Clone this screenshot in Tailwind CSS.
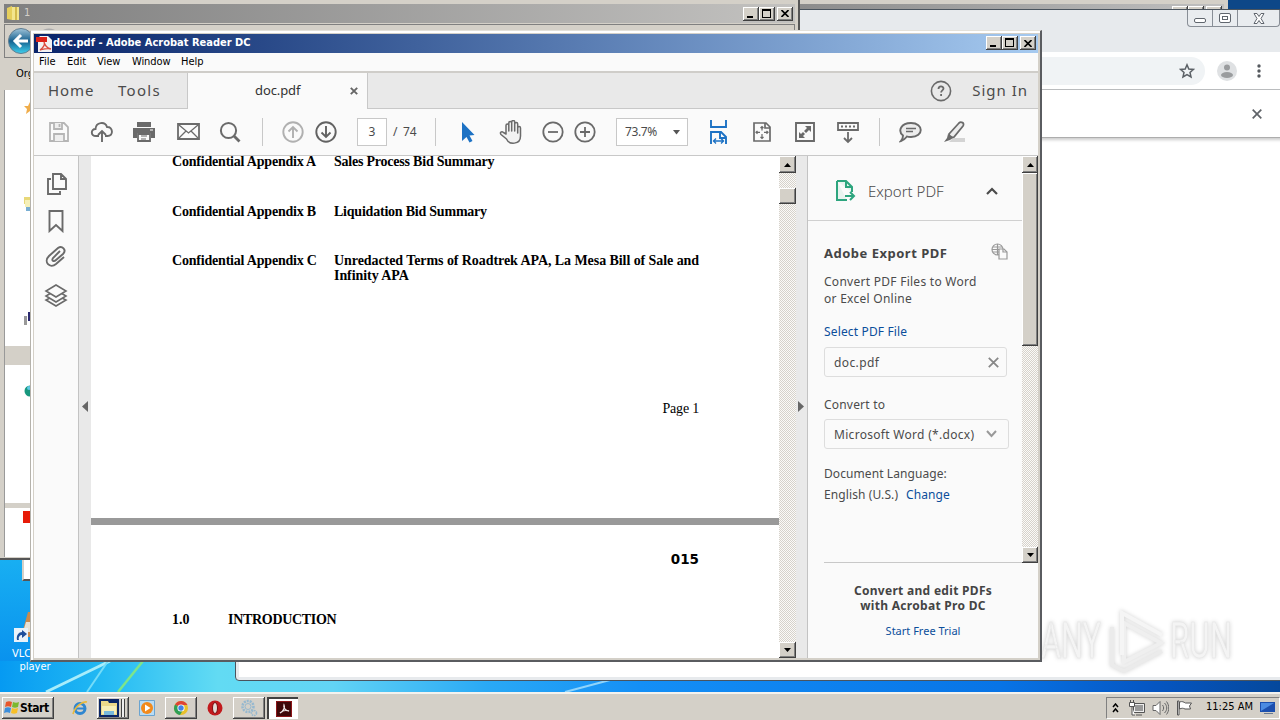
<!DOCTYPE html>
<html lang="en">
<head>
    <meta charset="UTF-8">
    <meta name="viewport" content="width=device-width, initial-scale=1.0">
    <title>doc.pdf - Adobe Acrobat Reader DC</title>
    <script src="https://cdn.jsdelivr.net/npm/@tailwindcss/browser@4"></script>
    <style>
        .ui { font-family: "DejaVu Sans Condensed", "DejaVu Sans", sans-serif; font-stretch: condensed; }
        .clean { font-family: "Noto Sans", "Open Sans", sans-serif; }
        .doc { font-family: "Liberation Serif", serif; }

        .raised {
            background: #d4d0c8;
            box-shadow: inset -1px -1px #404040, inset 1px 1px #fff, inset -2px -2px #808080;
        }

        .track {
            background: repeating-conic-gradient(#d6d2cb 0% 25%, #fbfaf8 0% 50%) 0 0 / 2px 2px;
        }

        svg { flex-shrink: 0; }
    </style>
</head>
<body class="overflow-hidden">
<div class="relative w-[1280px] h-[720px] overflow-hidden bg-[#0d8ff0]">

    <!-- Wallpaper -->
    <svg class="absolute left-0 top-0" width="1280" height="720">
        <defs>
            <linearGradient id="sky">
                <stop offset="0" stop-color="#069af2"/>
                <stop offset=".08" stop-color="#22b9f3"/>
                <stop offset=".17" stop-color="#62dbf3"/>
                <stop offset=".26" stop-color="#62d4f5"/>
                <stop offset=".38" stop-color="#2aa9f5"/>
                <stop offset=".5" stop-color="#148ff6"/>
                <stop offset=".78" stop-color="#0874e6"/>
                <stop offset=".9" stop-color="#0656c2"/>
                <stop offset="1" stop-color="#05489c"/>
            </linearGradient>
            <linearGradient id="left" x2="0" y2="1">
                <stop offset="0" stop-color="#18aff2"/>
                <stop offset="1" stop-color="#0992ee"/>
            </linearGradient>
        </defs>
        <rect width="1280" height="720" fill="url(#sky)"/>
        <rect y="559" width="31" height="102" fill="url(#left)"/>
        <rect x="1228" width="52" height="10" fill="#0d4788"/>
        <path d="M46 692 110 661" stroke="#a8edfb" stroke-width="3"/>
        <path d="M87 692 108 661" stroke="#74dcf8" stroke-width="2"/>
        <path d="M118 692 143 661" stroke="#7de58a" stroke-width="2.5"/>
        <path d="M565 692 610 680" stroke="#8fd4fb" stroke-width="2"/>
    </svg>

    <!-- Desktop shortcut -->
    <div class="ui absolute left-0 top-[610px] w-[70px] h-[64px] text-[11px] leading-[13px] text-white text-center">
        <svg class="absolute left-[13px] top-[2px]" width="20" height="42">
            <path d="M15 0 8 25h12V0Z" fill="#c98a4e"/>
            <path d="M13 10 10 20h10V10Z" fill="#e9e2d6"/>
            <path d="M1 16h14v14H1Z" fill="#e9f2fa"/>
            <path d="M4 28c-1-5 2-8 5-8v-2l5 4-5 4v-3c-2 0-4 2-3 5Z" fill="#1d4e9b"/>
        </svg>
        <div class="pt-[37px] pl-[12px] text-left whitespace-nowrap">VLC media</div>
        <div>player</div>
    </div>
    <div class="absolute left-[22px] top-[540px] w-5 h-[41px] bg-white border-2 border-[#d4d0c8] border-b-[#555]"></div>

    <!-- Explorer window at the back -->
    <div class="absolute left-[700px] top-0 w-[528px] h-[60px] bg-[#d4d0c8] pt-1 pr-1">
        <div class="h-[18px] bg-linear-to-r from-[#808080] to-[#c0c0c0] flex justify-end pt-[2px] pr-[2px]">
            <div class="raised w-4 h-[14px]"></div><div class="raised w-4 h-[14px]"></div><div class="raised w-4 h-[14px] ml-[2px]"></div>
        </div>
    </div>

    <!-- Chrome window -->
    <div class="absolute left-[235px] top-[9px] w-[1060px] h-[672px] rounded-b-[4px] border border-[#4a545e] bg-[#e7eaed] px-[3px] pb-[3px] flex flex-col">
        <div class="h-[42px]">
            <div class="ml-[948px] w-[93px] h-[17px] rounded-b-[4px] border border-t-0 border-[#888e96] flex bg-[#e9ecef]">
                <div class="w-[25px] border-r border-[#888e96] flex justify-center items-end pb-[3px]"><div class="w-3 h-[5px] rounded-[2px] border border-[#60666e] bg-white"></div></div>
                <div class="w-[25px] border-r border-[#888e96] flex justify-center items-center"><div class="w-3 h-[10px] rounded-[2px] border border-[#60666e] bg-white flex items-center justify-center"><div class="w-[6px] h-1 border border-[#60666e]"></div></div></div>
                <div class="flex-1 flex justify-center items-center">
                    <svg width="12" height="11" viewBox="0 0 12 11"><path d="M1 .5h3l2 3 2-3h3L8 5.500l3 5H8l-2-3-2 3H1l3-5Z" fill="#fff" stroke="#60666e"/></svg>
                </div>
            </div>
        </div>
        <div class="h-[38px] bg-white border-b border-[#b9bbbd] flex items-center">
            <div class="w-[966px] h-7 rounded-full bg-[#f0f3f5] flex items-center justify-end pr-[10px]">
                <svg width="16" height="16" viewBox="0 0 16 16" fill="none" stroke="#5b6066" stroke-width="1.500"><path d="m8 1.800 1.800 4.200 4.600.4L11 9.400l1 4.500-4-2.400-4 2.400 1-4.500L1.600 6.400 6.200 6Z"/></svg>
            </div>
            <svg class="ml-[12px]" width="20" height="20"><circle cx="10" cy="10" r="10" fill="#dfe1e3"/><circle cx="10" cy="6.500" r="3" fill="#9a9c9e"/><ellipse cx="10" cy="14" rx="6" ry="3" fill="#9a9c9e"/></svg>
            <svg class="ml-[19px]" width="6" height="16" fill="#55595e"><circle cx="3" cy="3" r="1.700"/><circle cx="3" cy="8" r="1.700"/><circle cx="3" cy="13" r="1.700"/></svg>
        </div>
        <div class="relative h-[48px] bg-white border-b border-[#adadad] shadow-[0_2px_3px_#ccc] flex items-center">
            <svg class="ml-[1013px]" width="10" height="10"><path d="M.7.7l8.600 8.600M9.300.7.7 9.300" stroke="#5f6368" stroke-width="1.700"/></svg>
        </div>
        <div class="flex-1 bg-white"></div>
    </div>

    <!-- Watermark -->
    <div class="absolute left-[1041px] top-[605px] w-[200px] h-[74px]">
        <svg width="200" height="74" style="filter: drop-shadow(0 0 2px #d2d2d2)">
            <g font-family="Roboto, sans-serif" font-size="50" font-weight="400" fill="#f4f4f4" stroke="#e6e6e6" stroke-width=".6">
                <text x="0" y="53" textLength="60" lengthAdjust="spacingAndGlyphs">ANY</text>
                <text x="129" y="53" textLength="62" lengthAdjust="spacingAndGlyphs">RUN</text>
            </g>
            <g fill="none" stroke="#efefef" stroke-width="4">
                <path d="M83 18 120 38 83 57Z"/>
                <path d="M71 22v38l12 6 38-20" stroke="#ebebeb"/>
                <path d="M81 50V8L121 30" stroke="#f5f5f5"/>
            </g>
        </svg>
    </div>

    <!-- Explorer window "1" -->
    <div class="absolute left-0 top-0 w-[800px] h-[560px] bg-[#d4d0c8] border-r-2 border-b-2 border-[#555] pl-1 pr-[3px] pt-1">
        <div class="h-[19px] bg-linear-to-r from-[#808080] to-[#c3c2c0] flex items-center pl-[3px] pr-[2px]">
            <svg width="13" height="15"><path d="M0 2 5 0v14l-5-1Z" fill="#e6cf5c"/><path d="M5 1h7v13H5Z" fill="#f3e58d"/><path d="M8 1h2v13H8Z" fill="#d3ba4c"/></svg>
            <span class="ui ml-1 text-[11px] text-[#d4d0c8]">1</span>
            <div class="ml-auto flex">
                <div class="raised w-4 h-[14px] pl-1 pt-[9px]"><div class="w-[6px] h-[2px] bg-black"></div></div>
                <div class="raised w-4 h-[14px] pl-[3px] pt-[2px]"><div class="w-[9px] h-[9px] border border-t-2 border-black"></div></div>
                <div class="raised w-4 h-[14px] ml-[2px] flex items-center justify-center"><svg width="8" height="7"><path d="M.5 0l7 7M7.500 0l-7 7" stroke="#000" stroke-width="1.600"/></svg></div>
            </div>
        </div>
        <div class="mt-[1px] h-[34px] border border-[#808080] flex items-center pl-[3px] overflow-hidden">
            <svg width="50" height="28">
                <defs><linearGradient id="orb" x2="0" y2="1"><stop offset="0" stop-color="#9fc3d8"/><stop offset=".5" stop-color="#17618f"/><stop offset="1" stop-color="#3ed0ee"/></linearGradient></defs>
                <circle cx="13" cy="14" r="12.500" fill="url(#orb)" stroke="#607d90"/>
                <path d="M20 14H7m6-6-6 6 6 6" stroke="#fff" stroke-width="3" fill="none"/>
                <circle cx="41" cy="14" r="12.500" fill="#aaa"/>
            </svg>
        </div>
        <div class="ui h-[32px] pl-3 pt-[8px] text-[11px]">Organize</div>
        <div class="relative h-[467px] bg-white border-l border-[#999]">
            <div class="pl-[19px] pt-3 w-[27px] overflow-hidden"><svg width="12" height="12"><path d="m6 0 2 4h4L9 7l1 5-4-3-4 3 1-5-3-3h4Z" fill="#f0ad4a"/></svg></div>
            <div class="pl-[19px] pt-[83px]"><svg width="12" height="14"><path d="M0 0h12v7H0Z" fill="#e8d878"/><path d="M2 5h10v9H2Z" fill="#78aed3"/><path d="M1 3h8v7H1Z" fill="#f5f0ba"/></svg></div>
            <div class="pl-[19px] pt-[100px]"><svg width="12" height="14"><path d="M0 5h3v9H0Z" fill="#999"/><path d="M4 1h5v9H4Z" fill="#2b2a70"/></svg></div>
            <div class="mt-[21px] h-[19px] bg-[#d4d0c8]"></div>
            <div class="pl-[19px] pt-[20px]"><svg width="12" height="12"><circle cx="6" cy="6" r="5.500" fill="#18987e"/><circle cx="5" cy="3" r="2" fill="#60c8e6"/></svg></div>
            <div class="mt-[106px] h-[5px] bg-[#d4d0c8]"></div>
            <div class="ml-[18px] mt-[3px] w-5 h-3 bg-[#e71b08]"></div>
        </div>
    </div>

    <!-- Acrobat Reader -->
    <div class="absolute left-[30px] top-[30px] w-[1012px] h-[632px] bg-[#d4d0c8] border-r-2 border-b-2 border-[#5a5c60] border-t border-l border-t-[#e4e1da] border-l-[#b5b2ab] flex flex-col shadow-[inset_2px_2px_#fff] pl-[3px] pt-[3px] pr-[2px] pb-[2px]">

        <div class="h-[19px] shrink-0 bg-linear-to-r from-[#0a246a] to-[#a6caf0] flex items-center pl-[2px] pr-[2px]">
            <svg width="16" height="16"><path d="M4 0h8l4 4v12H2V2Z" fill="#f3f1f1"/><path d="M0 1h11v5H0Z" fill="#dd2218"/><path d="M4 14c4-3 5-6 4-8 1 4 3 6 7 7-4-1-7 0-11 1Z" fill="none" stroke="#db4b3e" stroke-width="1.300"/></svg>
            <span class="ui ml-[1px] text-[11px] font-bold text-white w-[198px] whitespace-nowrap">doc.pdf - Adobe Acrobat Reader DC</span>
            <div class="ml-auto flex mb-[1px]">
                <div class="raised w-4 h-[14px] pl-1 pt-[9px]"><div class="w-[6px] h-[2px] bg-black"></div></div>
                <div class="raised w-4 h-[14px] pl-[3px] pt-[2px]"><div class="w-[9px] h-[9px] border border-t-2 border-black"></div></div>
                <div class="raised w-4 h-[14px] ml-[2px] flex items-center justify-center"><svg width="8" height="7"><path d="M.5 0l7 7M7.500 0l-7 7" stroke="#000" stroke-width="1.600"/></svg></div>
            </div>
        </div>

        <div class="ui h-[20px] shrink-0 bg-[#fafafa] border-b-2 border-[#cfcdc9] flex items-center text-[11px] text-black pl-[5px]">
            <span class="w-[28px]">File</span><span class="w-[30px]">Edit</span><span class="w-[35px]">View</span><span class="w-[49px] tracking-[-.1px]">Window</span><span>Help</span>
        </div>

        <div class="clean h-[36px] shrink-0 bg-[#e9e9e9] flex text-[#4b4b4b]">
            <div class="w-[154px] border-b border-r border-[#c8c8c8] flex items-center pl-[14px] text-[15px] tracking-[.9px]">
                <span class="w-[70px]">Home</span><span class="tracking-[1.3px]">Tools</span>
            </div>
            <div class="w-[180px] bg-[#fafafa] border-r border-[#c8c8c8] flex items-center text-[13px]">
                <span class="w-[162px] pl-[67px] text-[#333] tracking-[-.1px]">doc.pdf</span>
                <svg width="8" height="8"><path d="M.8.8l6.400 6.400M7.200.8.8 7.200" stroke="#666" stroke-width="1.900"/></svg>
            </div>
            <div class="flex-1 border-b border-[#c8c8c8] flex items-center justify-end pr-[10px] text-[15px] tracking-[1px]">
                <svg class="mr-5" width="22" height="22"><circle cx="11" cy="11" r="9.600" fill="none" stroke="#6a6a6a" stroke-width="1.600"/><path d="M8.500 9c0-3.500 5-3.200 5-.4 0 1.800-2.400 1.900-2.400 4M11.100 14v2" fill="none" stroke="#6a6a6a" stroke-width="1.800"/></svg>
                <span>Sign In</span>
            </div>
        </div>

        <div class="clean h-[47px] shrink-0 bg-[#fafafa] border-b border-[#c8c8c8] flex items-center pl-[14px] text-[12px] text-[#4b4b4b]">
            <svg class="mr-[20px]" width="22" height="22" fill="none" stroke="#b5b5b5" stroke-width="1.800"><path d="M2 2h14l4 4v14H2Z"/><path d="M6 2v6h8V2M11.500 3v3M6 20v-7h10v7" fill="#eee"/></svg>
            <svg class="mr-[19px]" width="24" height="24" fill="none" stroke="#6a6a6a" stroke-width="1.900"><path d="M9 16H6C.5 16 .5 9 5.500 9 6 2 15 1 17 7c6-.5 7 9 .5 9H15"/><path d="M12 22V11m-4 4 4-4 4 4"/></svg>
            <svg class="mr-[22px]" width="22" height="22"><path d="M4 1h14v5H4ZM0 7h22v10h-4v-5H4v5H0Z" fill="#6a6a6a"/><path d="M5.500 2.500h11M5 13h12v7H5Z" fill="#fafafa" stroke="#6a6a6a" stroke-width="1.800"/><path d="M8 15h6M8 18h5" stroke="#6a6a6a"/><path d="M17 9h3" stroke="#fff"/></svg>
            <svg class="mr-[19px]" width="23" height="22" fill="none" stroke="#6a6a6a"><path d="M1 3h21v15H1Z" stroke-width="1.800"/><path d="m2 4 9.500 8L21 4M2 17l7-7M21 17l-7-7" stroke-width="1.300"/></svg>
            <svg class="mr-[21px]" width="22" height="22" fill="none" stroke="#6a6a6a"><circle cx="9.500" cy="9.500" r="7.600" stroke-width="2"/><path d="m15 15 5.500 5.500" stroke-width="2.800"/></svg>
            <div class="w-px h-7 bg-[#c8c8c8] mr-[19px]"></div>
            <svg class="mr-[11px]" width="22" height="22" fill="none" stroke="#b0b0b0" stroke-width="1.900"><circle cx="11" cy="11" r="9.700"/><path d="M11 17V6m-4.500 4.500L11 6l4.500 4.500"/></svg>
            <svg class="mr-[20px]" width="22" height="22" fill="none" stroke="#626262" stroke-width="1.900"><circle cx="11" cy="11" r="9.700"/><path d="M11 5v11m-4.500-4.500L11 16l4.500-4.500"/></svg>
            <div class="w-[30px] h-7 bg-white border border-[#c8c8c8] flex items-center justify-center">3</div>
            <span class="ml-[6px] w-[42px] tracking-[-.2px] whitespace-pre">/  74</span>
            <div class="w-px h-7 bg-[#c8c8c8] mr-[25px]"></div>
            <svg class="mr-[23px]" width="15" height="22"><path d="M1 1v19l4.500-4 3 5.500 3-1.500-3-5.500 5-.5Z" fill="#1d72c4"/></svg>
            <svg class="mr-[19px]" width="24" height="24" fill="#f2f2f2" stroke="#6a6a6a" stroke-width="1.500" stroke-linejoin="round"><path d="M7 14V5.500c0-2 2.800-2 2.800 0V11 3c0-2 2.900-2 2.900 0v8-9c0-2 3-2 3 0v9-7c0-2 3-2 3 0v9-5c0-2 2.800-2 2.800 0v8c0 9-11.500 9-14 3L2 14.500c-1.500-2 .5-3.500 2.500-2Z"/></svg>
            <svg class="mr-[10px]" width="22" height="22" fill="none" stroke="#6a6a6a" stroke-width="1.800"><circle cx="11" cy="11" r="9.700"/><path d="M6 11h10"/></svg>
            <svg class="mr-[20px]" width="22" height="22" fill="none" stroke="#6a6a6a" stroke-width="1.800"><circle cx="11" cy="11" r="9.700"/><path d="M6 11h10M11 6v10"/></svg>
            <div class="w-[72px] h-7 bg-white border border-[#c8c8c8] flex items-center pl-2 tracking-[-.4px]"><span class="w-[48px]">73.7%</span><svg width="8" height="5"><path d="M0 0h7L3.500 4.500Z" fill="#555"/></svg></div>
            <svg class="ml-[21px] mr-[24px]" width="19" height="24" fill="none" stroke="#1d72c4" stroke-width="1.900"><path d="M2 0v7h15V0M2 24V12h10l5 5v7M11 12v6h6"/><path d="M4 21h11m-8-2.500L4.500 21 7 23.500m5-5 2.500 2.500-2.500 2.500" stroke-width="1.300"/></svg>
            <svg class="mr-[23px]" width="20" height="22" fill="none" stroke="#6a6a6a"><path d="M2 2h12l4 4v14H2ZM13 2v5h5" stroke-width="1.700"/><path d="M10 5.500v4M10 13v4M4 11.300h4M12 11.300h4M8.500 7 10 5.500 11.500 7m-3 9 1.500 1.500 1.500-1.500M5.500 10 4 11.300l1.500 1.400m9-2.700 1.500 1.300-1.500 1.400" stroke-width="1.200"/></svg>
            <svg class="mr-[22px]" width="20" height="22"><path d="M1 2h18v18H1Z" fill="none" stroke="#6a6a6a" stroke-width="1.900"/><path d="M10 5h6v6l-2-2-3 3-2-2 3-3ZM4 11l2 2 2-2 2 2-2 2 2 2H4Z" fill="#6a6a6a"/></svg>
            <svg class="mr-[20px]" width="22" height="24" fill="none" stroke="#6a6a6a" stroke-width="1.800"><path d="M1 3h20v7H1Z"/><path d="M4 6.500h14" stroke-dasharray="2 2" stroke-width="2"/><path d="M11 12v10m-4-4 4 4 4-4"/></svg>
            <div class="w-px h-7 bg-[#c8c8c8] mr-[19px]"></div>
            <svg class="mr-[20px]" width="23" height="22"><path d="M12 2c13 0 13 14 0 14-2 0-3 0-4-.5C6 18 4 19.500 2 20c1-1 2-3 2-5.500C-1.500 10 2 2 12 2Z" fill="#ededed" stroke="#6a6a6a" stroke-width="1.900"/><path d="M7 7.500h10M7 10.500h7" stroke="#6a6a6a" stroke-width="1.300"/></svg>
            <svg width="24" height="24"><path d="M11 18h12v4H7Z" fill="#d4d4d4"/><path d="M7 14 17 3c2-2 6 0 4 3l-9 11c-2 1-5-1-5-3Z" fill="#ededed" stroke="#6a6a6a" stroke-width="1.800"/><path d="m6 14 5 4-3 2-6 2 3-4Z" fill="#6a6a6a"/></svg>
        </div>

        <div class="flex-1 min-h-0 flex bg-[#fafafa]">
            <div class="w-[45px] border-r border-[#c3c3c3] flex flex-col items-center pt-[16px]">
                <svg class="ml-[2px]" width="22" height="24" fill="none" stroke="#6a6a6a" stroke-width="1.900"><path d="M7 2h8l5 5v10H7Zm8 0v5h5M5 7H2v15h12v-3"/></svg>
                <svg class="mt-[13px]" width="22" height="24" fill="none" stroke="#6a6a6a" stroke-width="1.900"><path d="M4.500 2h13v20L11 16l-6.500 6Z"/></svg>
                <svg class="mt-[12px]" width="22" height="24" fill="none" stroke="#6a6a6a" stroke-width="1.900"><path d="m15 6-7 7c-2 3 1 4 3 2l7-6c4-4-1-9-5-6L4 11c-6 6 1 13 7 8l8-7"/></svg>
                <svg class="mt-[14px]" width="24" height="25" fill="#fafafa" stroke="#6a6a6a" stroke-width="1.600"><path d="m12 12 10 5-10 6-10-6Z"/><path d="m12 7 10 6-10 6-10-6Z"/><path d="m12 2 10 6-10 6L2 8Z"/></svg>
            </div>
            <div class="w-3 bg-[#e9e9e9] flex items-center"><svg class="ml-[2px]" width="7" height="12"><path d="M7 0v11L1 5.500Z" fill="#666"/></svg></div>

            <!-- Document pages -->
            <div class="doc w-[688px] bg-white text-[14px] leading-[15px] text-black overflow-hidden">
                <div class="h-[364px] pl-[81px] font-bold tracking-[-.2px]">
                    <div class="flex h-[50px] -mt-[2px]"><span class="w-[162px]">Confidential Appendix A</span><span class="tracking-[-.22px]">Sales Process Bid Summary</span></div>
                    <div class="flex h-[49px]"><span class="w-[162px]">Confidential Appendix B</span><span class="tracking-[-.22px]">Liquidation Bid Summary</span></div>
                    <div class="flex h-[148px]"><span class="w-[162px]">Confidential Appendix C</span><div class="tracking-[-.07px]"><p class="w-[366px] whitespace-nowrap">Unredacted Terms of Roadtrek APA, La Mesa Bill of Sale and</p><p>Infinity APA</p></div></div>
                    <div class="w-[527px] text-right font-normal">Page 1</div>
                </div>
                <div class="h-[7px] bg-[#999]"></div>
                <div class="pt-[27px] w-[608px] text-right font-bold text-[13.500px]" style="font-family: 'DejaVu Sans', sans-serif">015</div>
                <div class="flex pl-[81px] pt-[45px] font-bold"><span class="w-[56px]">1.0</span><span class="tracking-[-.3px]">INTRODUCTION</span></div>
            </div>

            <div class="track w-[17px] flex flex-col">
                <div class="raised h-[17px] flex items-center justify-center"><svg width="7" height="4"><path d="M0 4h7L3.500 0Z"/></svg></div>
                <div class="raised h-4 mt-[15px]"></div>
                <div class="raised h-4 mt-auto flex items-center justify-center"><svg width="7" height="4"><path d="M0 0h7L3.500 4Z"/></svg></div>
            </div>
            <div class="w-[12px] bg-[#e9e9e9] border-r border-[#c3c3c3] flex items-center justify-center"><svg width="7" height="12"><path d="M0 0v11l6-5.500Z" fill="#666"/></svg></div>

            <!-- Export panel -->
            <div class="clean flex-1 flex flex-col text-[#4b4b4b] text-[12px]">
                <div class="flex h-[407px] shrink-0">
                    <div class="w-[214px] flex flex-col">
                        <div class="h-[65px] shrink-0 border-b border-[#d0d0d0] flex items-center pl-[27px] pt-[6px]">
                            <svg width="22" height="24"><path d="M2 2h9l6 6v5M12 21H2V2" fill="#e8f3ef" stroke="#2da57e" stroke-width="2"/><path d="M11 2v6h6" fill="none" stroke="#2da57e" stroke-width="2"/><path d="M10 17h9m-4-4 4 4-4 4" fill="none" stroke="#2da57e" stroke-width="2"/></svg>
                            <span class="ml-[11px] w-[118px] text-[15px] font-light">Export PDF</span>
                            <svg width="12" height="9"><path d="m1 7 5-5 5 5" fill="none" stroke="#4b4b4b" stroke-width="2.200"/></svg>
                        </div>
                        <div class="pl-4 pt-[22px] flex">
                            <span class="w-[167px] font-bold text-[13px] leading-[20px] tracking-[.5px] whitespace-nowrap text-[#444]">Adobe Export PDF</span>
                            <svg width="17" height="17" fill="none" stroke="#999" stroke-width="1.200"><circle cx="6.500" cy="6.500" r="5.500"/><path d="M6.500 1v11M1 6.500h11M2 4h9M2 9h9"/><path d="M8 6h5l3 3v7H8Z" fill="#fafafa"/><path d="M12 6v3h4"/></svg>
                        </div>
                        <p class="pl-4 pt-[10px] leading-[17px] whitespace-nowrap tracking-[.27px]">Convert PDF Files to Word<br>or Excel Online</p>
                        <a class="pl-4 mt-[16px] leading-[17px] tracking-[.15px] text-[#0b4e9b]">Select PDF File</a>
                        <div class="ml-4 mt-[7px] w-[183px] h-[30px] border border-[#ddd] rounded-[3px] flex items-center pl-[9px]"><span class="w-[154px] tracking-[.4px] pt-[1px]">doc.pdf</span><svg width="11" height="11"><path d="M.8.8l9.400 9.400M10.200.8.8 10.200" stroke="#888" stroke-width="1.800"/></svg></div>
                        <span class="pl-4 mt-[19px] leading-[17px] tracking-[.2px]">Convert to</span>
                        <div class="ml-4 mt-[6px] w-[185px] h-[30px] border border-[#ddd] rounded-[3px] flex items-center pl-[9px]"><span class="w-[152px] whitespace-nowrap tracking-[.3px] pt-[2px]">Microsoft Word (*.docx)</span><svg width="11" height="8"><path d="m1 1 4.500 5L10 1" fill="none" stroke="#999" stroke-width="2"/></svg></div>
                        <span class="pl-4 mt-[16px] leading-[17px] tracking-[.08px]">Document Language:</span>
                        <div class="pl-4 mt-[4px] leading-[17px] flex"><span class="w-[82px] tracking-[.1px]">English (U.S.)</span><a class="text-[#0b4e9b] tracking-[.1px]">Change</a></div>
                    </div>
                    <div class="track flex-1 flex flex-col">
                        <div class="raised h-[17px] flex items-center justify-center"><svg width="7" height="4"><path d="M0 4h7L3.500 0Z"/></svg></div>
                        <div class="raised h-[173px]"></div>
                        <div class="raised h-4 mt-auto flex items-center justify-center"><svg width="7" height="4"><path d="M0 0h7L3.500 4Z"/></svg></div>
                    </div>
                </div>
                <div class="ml-4 -mt-[1px] w-[198px] border-t border-[#c8c8c8] pt-[20px] text-center">
                    <p class="font-bold leading-[15px] tracking-[.3px] text-[#444]">Convert and edit PDFs<br>with Acrobat Pro DC</p>
                    <p class="mt-[10px] leading-[16px] text-[11px] text-[#0b4e9b]">Start Free Trial</p>
                </div>
            </div>
        </div>
    </div>

    <!-- Taskbar -->
    <div class="ui absolute left-0 top-[692px] w-[1280px] h-[28px] bg-[#d4d0c8] border-t-2 border-[#f4f2ee] flex items-center pl-[2px] pt-[1px] text-[11px]">
        <div class="raised w-[52px] h-[22px] flex items-center pl-[2px]">
            <svg width="16" height="16"><path d="M2 2c2-1 4-1 6 0L7 7C5 6 3 6 1 7Z" fill="#e8562a"/><path d="M9 2c2 1 4 1 6 0l-1 5c-2 1-4 1-6 0Z" fill="#7cb82f"/><path d="M1 8c2-1 4-1 6 0l-1 5c-2-1-4-1-6 0Z" fill="#3d8edb"/><path d="M8 8c2 1 4 1 6 0l-1 5c-2 1-4 1-6 0Z" fill="#f7bf28"/></svg>
            <span class="font-bold text-[12px] tracking-[-.4px]">Start</span>
        </div>
        <svg class="ml-[18px]" width="16" height="16" fill="none"><circle cx="8" cy="8.500" r="5" stroke="#2f86d0" stroke-width="3"/><path d="M4 8.500h9" stroke="#2f86d0" stroke-width="2"/><path d="M1 14C3 6 11 1 15 2" stroke="#e9b93b" stroke-width="1.600"/></svg>
        <div class="ml-[9px] w-8 h-[22px] flex raised p-[2px]">
            <svg width="20" height="18"><path d="M0 0h20v18H0Z" fill="#0b2666"/><path d="M2 2h7l1 2h8v12H2Z" fill="#ecd98a"/><path d="M3 7h14v8H3Z" fill="#f8efb8"/><path d="M5 12h10v4H5Z" fill="#79b9dc"/></svg>
            <div class="ml-[2px] w-[3px] border-l border-[#404040] bg-[#eee]"></div>
            <div class="w-[3px] border-l border-[#404040]"></div>
        </div>
        <svg class="ml-[10px]" width="16" height="16"><path d="M.5.500h15v15H.5Z" fill="#b9dcf4" stroke="#6ba4d0"/><circle cx="8" cy="8" r="6" fill="#f28a1c"/><path d="M6 4.500v7L11.500 8Z" fill="#fff"/></svg>
        <div class="ml-[10px] raised w-8 h-[22px] flex items-center justify-center">
            <svg width="16" height="16"><circle cx="8" cy="8" r="7" fill="#e8c02b"/><path d="M8 8 2 4.500C5-.5 12 0 14.500 5H8Z" fill="#de4436"/><path d="M8 8 2 4.500C-.5 9 2 14.500 7 15l3-5Z" fill="#2f9f55"/><circle cx="8" cy="8" r="3.600" fill="#fff"/><circle cx="8" cy="8" r="2.700" fill="#4382e5"/></svg>
        </div>
        <svg class="ml-[10px]" width="16" height="16"><ellipse cx="8" cy="8" rx="7.500" ry="7.500" fill="#c21a1d"/><ellipse cx="8" cy="8" rx="2.500" ry="5.500" fill="#e2dcd6" stroke="#7f0b0e"/></svg>
        <div class="ml-[10px] raised w-8 h-[22px] flex items-center justify-center">
            <svg width="18" height="18" fill="none" stroke="#96b8cf"><circle cx="8" cy="7.500" r="5.500" stroke-width="2.500" stroke-dasharray="2 1"/><circle cx="8" cy="7.500" r="3"/><circle cx="14" cy="14" r="2.500" stroke-width="1.600" stroke-dasharray="1.500 .8"/></svg>
        </div>
        <div class="ml-[2px] w-[31px] h-[22px] bg-white border-t-2 border-l-2 border-[#404040] flex items-center justify-center">
            <svg width="16" height="16"><path d="M0 0h16v16H0Z" fill="#3f0708"/><path d="M.5.500h15v15H.5Z" fill="none" stroke="#8d1619"/><path d="M4 12c4-2 5-6 4-8-1 3 2 6 5 6-3-1-7 0-9 2Z" fill="none" stroke="#f3e9e9" stroke-width="1.300"/></svg>
        </div>
        <div class="ml-auto w-[174px] h-[22px] border border-t-[#808080] border-l-[#808080] border-white flex items-center pl-[5px]">
            <svg width="7" height="10" fill="none" stroke="#000" stroke-width="1.500"><path d="m1 4 2.500-3L6 4M1 9l2.500-3L6 9"/></svg>
            <svg class="ml-[10px]" width="16" height="16" fill="#eee" stroke="#555"><path d="M4.500 3.500h11v9h-11ZM7 15h6"/><path d="M6 5h8v6H6Z" fill="#999" stroke="none"/><path d="M.5 2.500h5v4h-5ZM1.500 0v2M4.500 0v2M3 7v8h3" fill="#fff"/></svg>
            <svg class="ml-[7px]" width="17" height="16" fill="#fff" stroke="#666"><path d="M1 5.500h3l4-4v13l-4-4H1Z"/><path d="M10.500 5c1.500 2 1.500 4 0 6M12.500 3c3 3 3 7 0 10M14.500 1.500c3 4 3 9 0 13" fill="none"/></svg>
            <svg class="ml-[7px]" width="17" height="16" fill="#fff" stroke="#555"><path d="M1.500 1h1.500v14H1.500Z"/><path d="M3.500 2c3-1 4 0 6 1h6l-2 3 1 3H9c-2-1-3-1-5.500 0Z"/></svg>
            <span class="ml-[13px] w-[54px] whitespace-nowrap">11:25 AM</span>
            <svg width="15" height="14"><path d="M0 1h15v10H0Z" fill="#1c4fae"/><path d="M1 2h13L1 10Z" fill="#4b8be2"/><path d="M4 12h9v1H4Z" fill="#6a7a92"/></svg>
        </div>
    </div>
</div>
</body>
</html>
